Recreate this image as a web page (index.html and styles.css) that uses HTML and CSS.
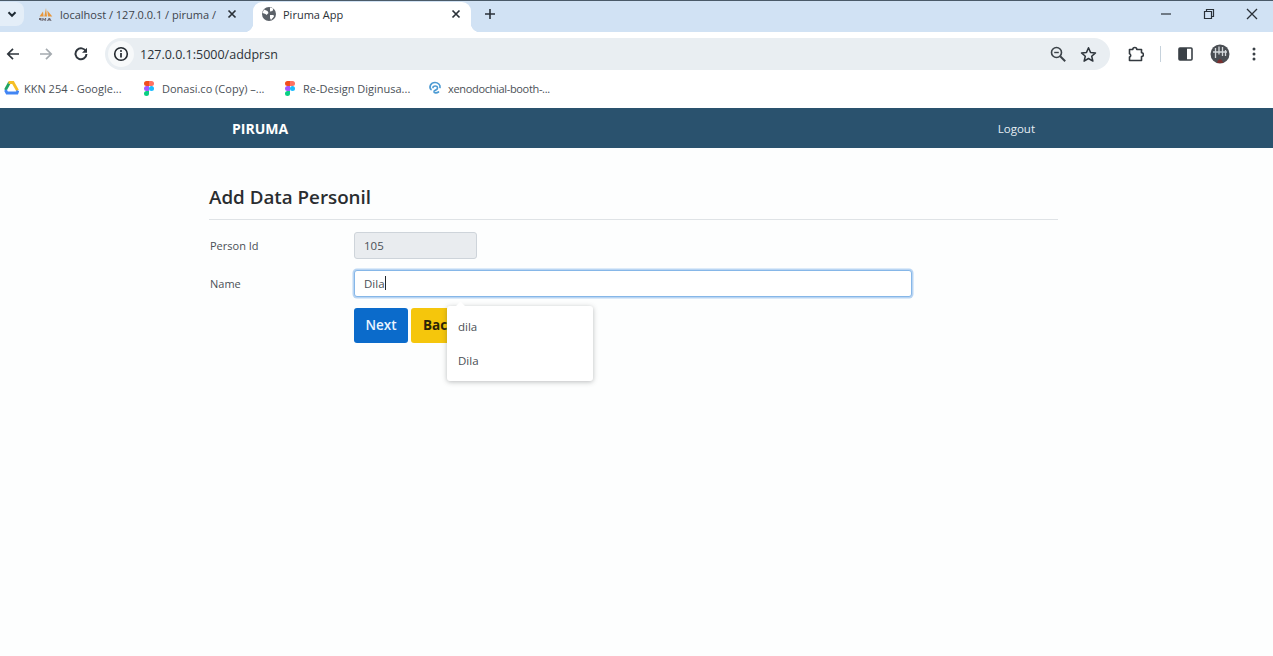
FILE: index.html
```html
<!DOCTYPE html>
<html>
	<head>
		<meta charset="UTF-8">
		<title>Piruma App</title>
		<link rel="stylesheet" href="styles.css">
	</head>
	<body>
		<div class="tabstrip">
			<div class="tab_menu">
				<svg width="12" height="12" viewBox="0 0 12 12"><path d="M2.500 4.200 6 7.800l3.500-3.600" fill="none" stroke="#1f2a33" stroke-width="2"/></svg>
			</div>
			<div class="tab">
				<svg class="favicon" width="16" height="16" viewBox="0 0 16 16">
					<path d="M1.500 10.500 5 5.500l.6 5zM6.300 10.500 8 2l1 8.500zM10 10.500 9.300 4.500l5 6z" fill="#e8963a"/>
					<path d="M1 12h2.500v3H2.600v-1H1zM4.300 15v-3h1l.9 1.400.9-1.400h1v3h-.8v-1.700l-1.100 1.600-1.100-1.600V15zM9 15l1.600-3h1.400l1.600 3h-1l-.3-.6h-2l-.3.600z" fill="#6f6a72"/>
				</svg>
				<span class="tab_title">localhost / 127.0.0.1 / piruma /</span>
				<svg class="tab_close" width="10" height="10" viewBox="0 0 10 10"><path d="M1.500 1.500l7 7M8.500 1.500l-7 7" stroke="#2a3138" stroke-width="1.700"/></svg>
			</div>
			<div class="tab tab_active">
				<svg class="favicon" width="16" height="16" viewBox="0 0 16 16">
					<circle cx="8" cy="8" r="7" fill="#5b6168"/>
					<path d="M3 3.500 6.500 5 7.500 7 5.500 9 4.500 8 1.500 7zM9 1.500l3.500 1-1 2.500-2.500.5zM9 9h3.500l.5 1.500-3 3.500-1-2z" fill="#fff"/>
				</svg>
				<span class="tab_title">Piruma App</span>
				<svg class="tab_close" width="10" height="10" viewBox="0 0 10 10"><path d="M1.500 1.500l7 7M8.500 1.500l-7 7" stroke="#2a3138" stroke-width="1.700"/></svg>
			</div>
			<svg class="new_tab" width="12" height="12" viewBox="0 0 12 12"><path d="M6 1v10M1 6h10" stroke="#2a3138" stroke-width="1.600"/></svg>
			<div class="window_btns">
				<svg width="12" height="12" viewBox="0 0 12 12"><path d="M1 6h10" stroke="#3a4149" stroke-width="1.300"/></svg>
				<svg width="12" height="12" viewBox="0 0 12 12"><path d="M1.500 3.500h7v7h-7zM3.500 3.500v-2h7v7h-2" fill="none" stroke="#2a3138" stroke-width="1.200"/></svg>
				<svg width="12" height="12" viewBox="0 0 12 12"><path d="M1 1l10 10M11 1 1 11" stroke="#2a3138" stroke-width="1.300"/></svg>
			</div>
		</div>

		<div class="toolbar">
			<svg class="nav_icon" width="14" height="14" viewBox="0 0 14 14"><path d="M13 7H2M7 1.800 1.800 7 7 12.200" fill="none" stroke="#2f363d" stroke-width="1.700"/></svg>
			<svg class="nav_icon" width="14" height="14" viewBox="0 0 14 14"><path d="M1 7h11M7 1.800 12.200 7 7 12.200" fill="none" stroke="#a5abb0" stroke-width="1.700"/></svg>
			<svg class="nav_icon" width="14" height="14" viewBox="0 0 14 14"><path d="M12 4.500A5.500 5.500 0 1 0 12.500 7" fill="none" stroke="#2f363d" stroke-width="2"/><path d="M13 .8v5H8z" fill="#2f363d"/></svg>
			<div class="address">
				<span class="info_chip">
					<svg width="16" height="16" viewBox="0 0 16 16"><circle cx="8" cy="8" r="6.300" fill="none" stroke="#22282e" stroke-width="1.600"/><path d="M8 7v4.500" stroke="#22282e" stroke-width="1.700"/><circle cx="8" cy="4.900" r="1" fill="#22282e"/></svg>
				</span>
				<span class="url">127.0.0.1:5000/addprsn</span>
				<svg class="zoom_icon" width="16" height="16" viewBox="0 0 16 16"><circle cx="6.500" cy="6.500" r="5" fill="none" stroke="#3c4349" stroke-width="1.600"/><path d="M10.200 10.200l5 5" stroke="#3c4349" stroke-width="2"/><path d="M4.200 6.500h4.600" stroke="#3c4349" stroke-width="1.400"/></svg>
				<svg width="17" height="17" viewBox="0 0 17 17"><path d="M8.500 1.800l2 4.600 5 .5-3.800 3.300 1.200 4.900-4.400-2.600-4.400 2.600 1.200-4.900L1.500 6.900l5-.5z" fill="none" stroke="#2f363d" stroke-width="1.500" stroke-linejoin="round"/></svg>
			</div>
			<div class="toolbar_right">
				<svg class="ext_icon" width="16" height="16" viewBox="0 0 16 16"><path d="M1.500 3.500h3.300a2 2 0 0 1 4 0h4.700v3.300a1.900 1.900 0 0 1 0 3.800v3.900H1.500v-3.400a1.800 1.800 0 0 0 0-3.400z" fill="none" stroke="#33393f" stroke-width="1.600" stroke-linejoin="round"/></svg>
				<span class="divider"></span>
				<svg class="panel_icon" width="15" height="14" viewBox="0 0 15 14"><rect x="1" y="1" width="13" height="12" rx="1" fill="none" stroke="#3a4046" stroke-width="1.600"/><rect x="1" y="1" width="8" height="12" fill="#3a4046"/></svg>
				<svg class="avatar" width="20" height="20" viewBox="0 0 20 20">
					<circle cx="10" cy="10" r="9.500" fill="#4a4e53"/>
					<path d="M5.500 4v10M9 2.500v8M12.500 3v9M15.500 6v6M3 8h14" stroke="#d3d7da" stroke-width="1.300"/>
					<path d="M7 19c1-5 5-5 6 0z" fill="#7a2f2f"/>
				</svg>
				<svg class="more_icon" width="4" height="14" viewBox="0 0 4 14"><circle cx="2" cy="2" r="1.500" fill="#3a4046"/><circle cx="2" cy="7" r="1.500" fill="#3a4046"/><circle cx="2" cy="12" r="1.500" fill="#3a4046"/></svg>
			</div>
		</div>

		<div class="bookmarks">
			<div class="bookmark bm_drive">
				<svg width="15" height="14" viewBox="0 0 15 14">
					<path d="M5.500 1.500 1.400 9" fill="none" stroke="#1fa463" stroke-width="2.800"/>
					<path d="M4.500 1.500h4.500l4.500 8" fill="none" stroke="#f6bf26" stroke-width="2.800"/>
					<path d="M1.400 9 3 12h10l1-2.500" fill="none" stroke="#4285f4" stroke-width="2.800"/>
				</svg>
				<span>KKN 254 - Google...</span>
			</div>
			<div class="bookmark bm_donasi">
				<svg width="10" height="15" viewBox="0 0 10 15"><path d="M1 0h4v5H2.500A2.500 2.500 0 0 1 2.500 0z" fill="#f24e1e"/><path d="M5 0h2.500a2.500 2.500 0 0 1 0 5H5z" fill="#ff7262"/><path d="M2.500 5H5v5H2.500a2.500 2.500 0 0 1 0-5z" fill="#a259ff"/><circle cx="7.500" cy="7.500" r="2.500" fill="#1abcfe"/><path d="M2.500 10H5v2.500A2.500 2.500 0 1 1 2.500 10z" fill="#0acf83"/></svg>
				<span>Donasi.co (Copy) –...</span>
			</div>
			<div class="bookmark bm_redesign">
				<svg width="10" height="15" viewBox="0 0 10 15"><path d="M1 0h4v5H2.500A2.500 2.500 0 0 1 2.500 0z" fill="#f24e1e"/><path d="M5 0h2.500a2.500 2.500 0 0 1 0 5H5z" fill="#ff7262"/><path d="M2.500 5H5v5H2.500a2.500 2.500 0 0 1 0-5z" fill="#a259ff"/><circle cx="7.500" cy="7.500" r="2.500" fill="#1abcfe"/><path d="M2.500 10H5v2.500A2.500 2.500 0 1 1 2.500 10z" fill="#0acf83"/></svg>
				<span>Re-Design Diginusa...</span>
			</div>
			<div class="bookmark bm_xeno">
				<svg width="14" height="14" viewBox="0 0 14 14"><path d="M3 8.500C.8 6 2.500 1.500 7 1.500c3 0 5.500 2.300 5 5M5 6.500C5 4.800 9.500 4 9.500 7c0 2.500-4 1.800-3.500 4 .3 1 2.500 1.500 4.500 0" fill="none" stroke="#4d9bd3" stroke-width="1.700" stroke-linecap="round"/></svg>
				<span>xenodochial-booth-...</span>
			</div>
		</div>

		<nav class="navbar">
			<a class="brand">PIRUMA</a>
			<a class="logout">Logout</a>
		</nav>

		<div class="content">
			<h1>Add Data Personil</h1>
			<div class="form_row">
				<label>Person Id</label>
				<div class="field field_disabled">105</div>
			</div>
			<div class="form_row">
				<label>Name</label>
				<div class="field field_focus">Dila<span class="caret"></span></div>
			</div>
			<div class="actions">
				<a class="btn btn_next">Next</a>
				<a class="btn btn_back">Back</a>
				<ul class="suggest">
					<li>dila</li>
					<li>Dila</li>
				</ul>
			</div>
		</div>
	</body>
</html>
```

FILE: styles.css
```css
*{
	box-sizing: border-box;
}
body{
	margin: 0;
	height: 656px;
	overflow: hidden;
	background: #fdfefe;
	font-family: "Open Sans", "Noto Sans", sans-serif;
	color: #212529;
}
svg{
	display: block;
	flex: none;
}
.tabstrip{
	display: flex;
	align-items: flex-start;
	height: 32px;
	padding-top: 1px;
	background: #d1e2f4;
	border-top: 1px solid #4a5a68;
}
.tab_menu{
	display: flex;
	align-items: center;
	justify-content: center;
	width: 24px;
	height: 24px;
	background: #e4eef8;
	border-radius: 0 8px 8px 0;
}
.tab{
	display: flex;
	align-items: center;
	width: 226px;
	height: 30px;
	margin-left: 2px;
	padding: 0 0 6px 12px;
	font-size: 11px;
	color: #3d444b;
}
.tab .tab_title{
	flex: 1;
	margin-left: 6px;
	white-space: nowrap;
}
.tab_close{
	margin-right: 15px;
}
.tab_active{
	position: relative;
	width: 218px;
	margin-left: 1px;
	padding-left: 8px;
	background: #fff;
	border-radius: 9px 9px 0 0;
	color: #2b3136;
}
.tab_active .tab_close{
	margin-right: 10px;
}
.tab_active:before,.tab_active:after{
	content: "";
	position: absolute;
	bottom: 0;
	width: 9px;
	height: 9px;
}
.tab_active:before{
	left: -9px;
	background: radial-gradient(circle at 0 0, transparent 9px, #fff 9.500px);
}
.tab_active:after{
	right: -9px;
	background: radial-gradient(circle at 100% 0, transparent 9px, #fff 9.500px);
}
.new_tab{
	margin: 6px 0 0 13px;
}
.window_btns{
	display: flex;
	gap: 31px;
	margin: 6px 15px 0 auto;
}
.toolbar{
	display: flex;
	align-items: center;
	height: 38px;
	padding: 6px 0 0 6px;
	background: #fff;
}
.nav_icon{
	margin-right: 19px;
}
.nav_icon:nth-child(2){
	margin-right: 21px;
}
.nav_icon:nth-child(3){
	margin-right: 18px;
}
.address{
	display: flex;
	align-items: center;
	width: 1005px;
	height: 32px;
	margin-left: -1px;
	padding: 0 13px 0 3px;
	background: #e9eef2;
	border-radius: 16px;
	font-size: 12.500px;
	color: #2c3238;
}
.info_chip{
	display: flex;
	align-items: center;
	justify-content: center;
	width: 26px;
	height: 26px;
	background: #f7f9fa;
	border-radius: 50%;
}
.url{
	flex: 1;
	margin-left: 6px;
}
.zoom_icon{
	margin-right: 14px;
}
.toolbar_right{
	display: flex;
	align-items: center;
	margin-left: 18px;
}
.divider{
	width: 1px;
	height: 16px;
	margin: 0 17px 0 16px;
	background: #c6d2dc;
}
.panel_icon{
	margin-right: 17px;
}
.more_icon{
	margin-left: 22px;
}
.bookmarks{
	display: flex;
	align-items: center;
	height: 38px;
	padding: 0 0 2px 4px;
	background: #fff;
	font-size: 11px;
	color: #4b5157;
}
.bookmark{
	display: flex;
	align-items: center;
	gap: 6px;
	white-space: nowrap;
}
.bm_drive{
	width: 140px;
}
.bm_drive span{
	margin-left: -1px;
}
.bm_donasi{
	width: 141px;
}
.bm_donasi span{
	margin-left: 2px;
}
.bm_redesign{
	width: 143px;
}
.bm_redesign span{
	margin-left: 2px;
}
.bm_xeno span{
	letter-spacing: -0.03em;
}
.navbar{
	display: flex;
	align-items: center;
	justify-content: space-between;
	height: 40px;
	padding: 0 238px 0 232px;
	background: #2a526e;
	color: #fff;
}
.brand{
	font-size: 14px;
	font-weight: 700;
}
.logout{
	font-size: 11.500px;
	color: #e6eef4;
}
.content{
	width: 849px;
	margin-left: 209px;
	padding-top: 37px;
}
h1{
	margin: 0 0 12px;
	padding-bottom: 9px;
	border-bottom: 1px solid #dfe3e6;
	font-size: 18.800px;
	line-height: 25px;
	font-weight: 600;
	color: #2a2d30;
}
.form_row{
	display: flex;
	align-items: center;
	margin-bottom: 11px;
	font-size: 11px;
	color: #4a5056;
}
.form_row label{
	width: 145px;
	padding: 0 0 1px 1px;
}
.field{
	display: flex;
	align-items: center;
	height: 27px;
	padding: 0 9px 1px;
	border: 1px solid #ced4da;
	border-radius: 3px;
	background: #fff;
	font-size: 11.500px;
	color: #4a5056;
}
.field_disabled{
	width: 123px;
	background: #e9ecef;
}
.field_focus{
	width: 558px;
	border-color: #86b7e8;
	box-shadow: 0 0 0 1.500px #b9d5f3;
}
.caret{
	width: 1px;
	height: 14px;
	background: #23272b;
}
.actions{
	position: relative;
	display: flex;
	gap: 3px;
	margin-left: 145px;
}
.btn{
	display: flex;
	align-items: center;
	height: 35px;
	padding: 0 12px 1px;
	border-radius: 3px;
	font-size: 13.500px;
}
.btn_next{
	width: 54px;
	justify-content: center;
	padding: 0 0 1px;
	background: #0b6bcb;
	color: #eaf4ff;
	font-weight: 600;
}
.btn_back{
	background: #f5c60c;
	color: #2b2406;
	font-weight: 700;
}
.suggest{
	position: absolute;
	left: 93px;
	top: -2px;
	width: 146px;
	height: 75px;
	margin: 0;
	padding: 3px 0;
	list-style: none;
	background: #fff;
	border-radius: 3px;
	box-shadow: 0 1px 5px rgba(60,64,67,0.35);
	font-size: 11.500px;
	color: #4a4f55;
}
.suggest:before{
	content: "";
	position: absolute;
	top: -3px;
	left: 10px;
	width: 7px;
	height: 7px;
	background: #fff;
	transform: rotate(45deg);
}
.suggest li{
	display: flex;
	align-items: center;
	height: 34px;
	padding-left: 11px;
}
```
